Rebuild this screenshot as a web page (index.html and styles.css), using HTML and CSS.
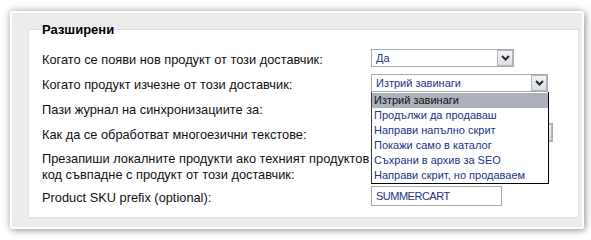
FILE: index.html
```html
<!DOCTYPE html>
<html lang="bg">
<head>
<meta charset="utf-8">
<link rel="stylesheet" href="styles.css">
</head>
<body>
<div class="panel">
  <div class="panel-inner">
    <fieldset class="box">
      <legend class="box-title">Разширени</legend>
      <div class="form">
        <div class="label">Когато се появи нов продукт от този доставчик:</div>
        <div class="control">
          <div class="select w143"><span class="value">Да</span><span class="btn"><svg width="9" height="6" viewBox="0 0 9 6"><path d="M1 1 L4.5 4.5 L8 1" fill="none" stroke="#2b2b33" stroke-width="2"/></svg></span></div>
        </div>

        <div class="label">Когато продукт изчезне от този доставчик:</div>
        <div class="control">
          <div class="select-wrap">
            <div class="select w177"><span class="value">Изтрий завинаги</span><span class="btn"><svg width="9" height="6" viewBox="0 0 9 6"><path d="M1 1 L4.5 4.5 L8 1" fill="none" stroke="#2b2b33" stroke-width="2"/></svg></span></div>
            <ul class="dropdown">
              <li class="opt active">Изтрий завинаги</li>
              <li class="opt">Продължи да продаваш</li>
              <li class="opt">Направи напълно скрит</li>
              <li class="opt">Покажи само в каталог</li>
              <li class="opt">Съхрани в архив за SEO</li>
              <li class="opt">Направи скрит, но продаваем</li>
            </ul>
          </div>
        </div>

        <div class="label">Пази журнал на синхронизациите за:</div>
        <div class="control">
          <div class="select w150"><span class="value">30 дни</span><span class="btn"></span></div>
        </div>

        <div class="label">Как да се обработват многоезични текстове:</div>
        <div class="control">
          <div class="select w182 tall"><span class="value">Автоматично</span><span class="btn"></span></div>
        </div>

        <div class="label two">Презапиши локалните продукти ако техният продуктов<br>код съвпадне с продукт от този доставчик:</div>
        <div class="control">
          <span class="check"></span>
        </div>

        <div class="label">Product SKU prefix (optional):</div>
        <div class="control">
          <div class="input">SUMMERCART</div>
        </div>
      </div>
    </fieldset>
  </div>
</div>
</body>
</html>
```

FILE: styles.css
```css
html, body {
  margin: 0;
  padding: 0;
  background: #ffffff;
}
body {
  padding: 11px 7px 10px 10px;
  font-family: "Liberation Sans", Arial, sans-serif;
  color: #111111;
}
.panel {
  background: #ffffff;
  padding: 2px;
  border-radius: 3px;
  box-shadow: 0 0 9px rgba(0, 0, 0, 0.3), 2px 2px 6px rgba(0, 0, 0, 0.2);
}
.panel-inner {
  background: #ececec;
  padding: 9px 3px 9px 16px;
}
.box {
  margin: 0;
  min-width: 0;
  background: #ffffff;
  border: 1px solid #dde3e3;
  padding: 8px 0 10px 13px;
}
.box-title {
  padding: 0;
  font-size: 13px;
  line-height: 15px;
  font-weight: bold;
  color: #000000;
}
.form {
  display: grid;
  grid-template-columns: 329px 1fr;
  grid-template-rows: 25px 25px 25px 25px 40px 22px;
  align-items: center;
}
.label {
  font-size: 12.8px;
  line-height: 16px;
  padding-top: 4px;
  white-space: nowrap;
}
.control {
  display: flex;
  align-items: center;
}
.select-wrap {
  position: relative;
}
.select {
  display: flex;
  height: 18px;
  box-sizing: border-box;
  border: 1px solid #a7abb2;
  background: #ffffff;
  font-size: 11px;
  color: #24338a;
}
.select.tall {
  height: 19px;
}
.w143 { width: 143px; }
.w177 { width: 177px; }
.w150 { width: 150px; }
.w182 { width: 182px; }
.value {
  flex: 1;
  padding-left: 4px;
  line-height: 16px;
}
.btn {
  width: 16px;
  box-sizing: border-box;
  border: 1px solid #b4b6c0;
  background: linear-gradient(#f2f2f5, #dcdde3);
  display: flex;
  align-items: center;
  justify-content: center;
}
.dropdown {
  position: absolute;
  z-index: 5;
  top: 100%;
  left: 0;
  width: 178px;
  box-sizing: border-box;
  margin: 0;
  padding: 1px 0 0 0;
  list-style: none;
  background: #ffffff;
  border: 1px solid #000000;
  border-top: none;
  border-left-color: #3a3a3a;
}
.opt {
  height: 15px;
  line-height: 15px;
  padding-left: 2px;
  font-size: 11px;
  color: #24338a;
  white-space: nowrap;
}
.opt.active {
  background: #adb1bb;
  color: #111111;
}
.check {
  width: 13px;
  height: 13px;
  border: 1px solid #a7abb2;
  background: #ffffff;
}
.input {
  width: 131px;
  height: 20px;
  box-sizing: border-box;
  border: 1px solid #a9a9a9;
  padding-left: 4px;
  line-height: 18px;
  font-size: 11px;
  letter-spacing: -0.5px;
  color: #24338a;
}
```
